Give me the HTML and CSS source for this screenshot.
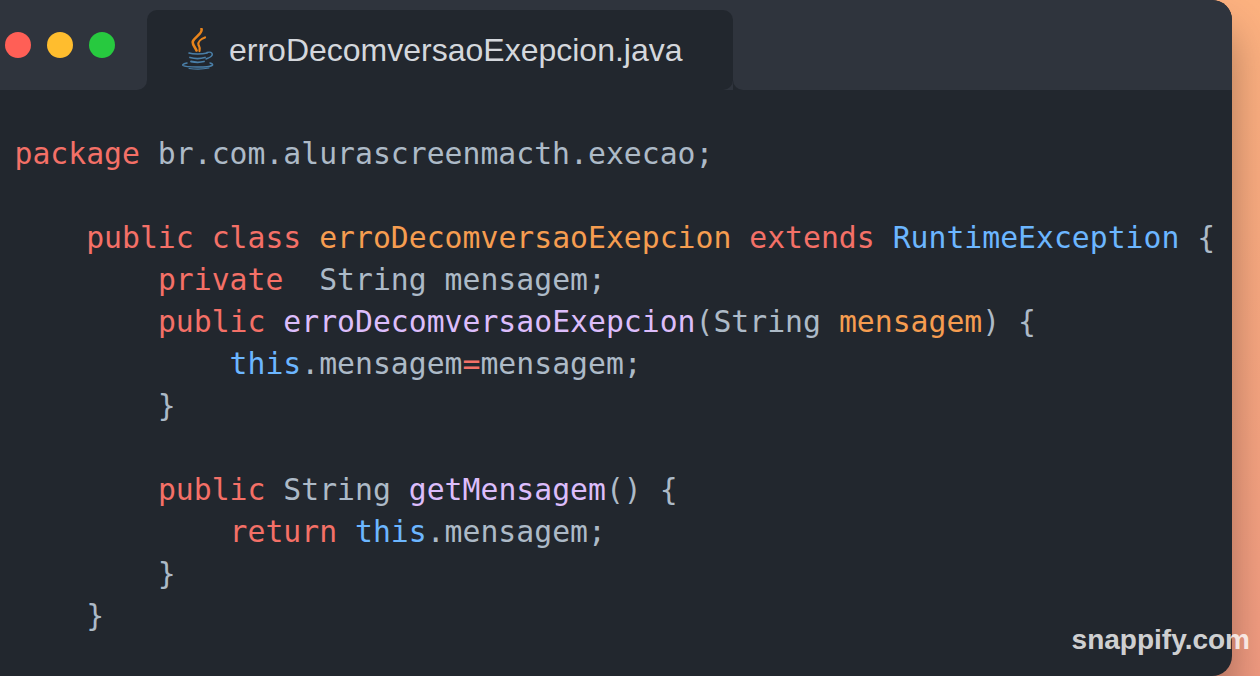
FILE: index.html
```html
<!DOCTYPE html>
<html lang="en">
<head>
<meta charset="utf-8">
<title>erroDecomversaoExepcion.java</title>
<link rel="stylesheet" href="styles.css">
</head>
<body>
<main class="window">
  <header class="titlebar">
    <div class="controls">
      <span class="dot dot-red"></span>
      <span class="dot dot-yellow"></span>
      <span class="dot dot-green"></span>
    </div>
    <div class="tab-slot">
      <div class="tab">
        <svg class="java-icon" width="34" height="42" viewBox="0 0 34 42" fill="none" aria-hidden="true">
          <g stroke="#e8841c" stroke-linecap="round" fill="none">
            <path d="M20.5 1C22 5 14.5 8.5 12 13C10.5 16 14 19 15.5 22.5" stroke-width="2.6"/>
            <path d="M24 9.5C20 11 16.5 14 17.5 17C18.5 19 19.5 20 18.5 23" stroke-width="2.2"/>
          </g>
          <g stroke="#4a7fa8" stroke-linecap="round" fill="none">
            <path d="M8 25C12 26.3 21 26.3 26 25" stroke-width="1.6"/>
            <path d="M26 24.5C31 23 32.5 26.5 30 28.5C28.5 29.8 26 30.5 25 31" stroke-width="1.4"/>
            <path d="M9 29.5C13 30.6 20 30.6 24 29.5" stroke-width="1.8"/>
            <path d="M10 33.5C14 34.4 19.5 34.4 23 33.5" stroke-width="1.8"/>
            <path d="M6 35C3 35.5 1 36.5 2 37.5C5 39.5 27 39.8 31 37.5C32.5 36.5 31 35.5 29 35" stroke-width="1.5"/>
            <path d="M8 40.5C14 41.3 22 41.3 28 40" stroke-width="1.2"/>
          </g>
        </svg>
        <span class="tab-name">erroDecomversaoExepcion.java</span>
      </div>
    </div>
    <div class="titlebar-rest"></div>
  </header>
  <pre class="code"><code><span class="kw">package</span> br.com.alurascreenmacth.execao;

    <span class="kw">public</span> <span class="kw">class</span> <span class="ty">erroDecomversaoExepcion</span> <span class="kw">extends</span> <span class="bl">RuntimeException</span> {
        <span class="kw">private</span>  String mensagem;
        <span class="kw">public</span> <span class="fn">erroDecomversaoExepcion</span>(String <span class="ty">mensagem</span>) {
            <span class="bl">this</span>.mensagem<span class="kw">=</span>mensagem;
        }

        <span class="kw">public</span> String <span class="fn">getMensagem</span>() {
            <span class="kw">return</span> <span class="bl">this</span>.mensagem;
        }
    }</code></pre>
</main>
<div class="watermark">snappify.com</div>
</body>
</html>
```
FILE: styles.css
```css
* { box-sizing: border-box; }
html, body { margin: 0; height: 100%; }
body {
  width: 1260px;
  height: 676px;
  overflow: hidden;
  position: relative;
  background: linear-gradient(180deg, #fcb17f 0%, #f09a80 100%);
}
.window {
  width: 1232px;
  height: 676px;
  background: #22272e;
  border-radius: 0 20px 20px 0;
  box-shadow: 0 30px 40px rgba(0, 0, 0, 0.3);
  overflow: hidden;
}
.titlebar { display: flex; height: 90px; }
.controls {
  width: 147px;
  background: #2f343d;
  border-bottom-right-radius: 10px;
  display: flex;
  align-items: center;
  gap: 16px;
  padding-left: 5px;
}
.dot { width: 26px; height: 26px; border-radius: 50%; }
.dot-red { background: #ff5f56; }
.dot-yellow { background: #ffbd2e; }
.dot-green { background: #27c93f; }
.tab-slot { background: #2f343d; padding-top: 10px; }
.tab {
  width: 586px;
  height: 80px;
  background: #22272e;
  border-radius: 10px 10px 0 0;
  border-bottom-right-radius: 10px;
  display: flex;
  align-items: center;
  padding-left: 34px;
  gap: 14px;
}
.java-icon { flex: none; margin-top: -3px; }
.tab-name {
  font-family: "Liberation Sans", Arial, sans-serif;
  font-size: 32px;
  color: #d4d7dc;
}
.titlebar-rest {
  flex: 1;
  background: #2f343d;
  border-bottom-left-radius: 10px;
}
.code {
  margin: 0;
  padding: 43px 0 0 14.5px;
  font-family: "DejaVu Sans Mono", "Liberation Mono", monospace;
  font-size: 29.77px;
  line-height: 42px;
  color: #adbac7;
}
.code code { font: inherit; }
.kw { color: #f47067; }
.ty { color: #f69d50; }
.bl { color: #6cb6ff; }
.fn { color: #dcbdfb; }
.watermark {
  position: absolute;
  right: 10px;
  bottom: 20px;
  font-family: "Liberation Sans", Arial, sans-serif;
  font-weight: 700;
  font-size: 28px;
  line-height: 32px;
  color: rgba(255, 255, 255, 0.8);
}
```
